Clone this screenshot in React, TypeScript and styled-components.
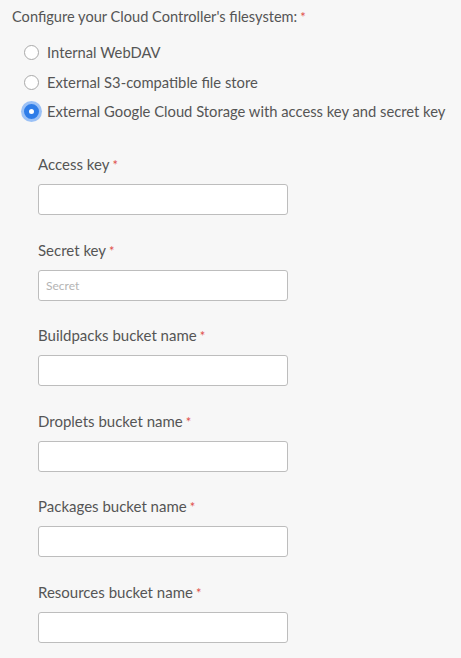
import React, { useState } from 'react';
import styled, { createGlobalStyle } from 'styled-components';

const GlobalStyle = createGlobalStyle`
  html, body {
    margin: 0;
    padding: 0;
    background: #f7f7f7;
  }
  body {
    font-family: Lato, "Open Sans", "Liberation Sans", sans-serif;
    color: #555;
  }
`;

const Page = styled.div`
  padding: 6px 12px 0 12px;
`;

const Heading = styled.div`
  font-size: 14.6px;
  line-height: 22px;
  height: 22px;
  color: #555;
  white-space: nowrap;
`;

const Star = styled.span`
  color: #e0504a;
  margin-left: 3px;
  font-size: 13px;
  line-height: 1;
`;

const RadioList = styled.div`
  display: flex;
  flex-direction: column;
  gap: 8.5px;
  margin-top: 14px;
  padding-left: 12px;
`;

const RadioRow = styled.label`
  display: flex;
  align-items: center;
  gap: 8px;
  font-size: 14.75px;
  line-height: 21px;
  color: #555;
  white-space: nowrap;
  cursor: pointer;
`;

const Dot = styled.span<{ $on: boolean }>`
  width: 15px;
  height: 15px;
  border-radius: 50%;
  box-sizing: border-box;
  flex: none;
  background: #fff;
  border: ${p => (p.$on ? '5px solid #2f7de8' : '1px solid #a9a9a9')};
  box-shadow: ${p => (p.$on ? '0 0 0 3px rgba(80, 150, 245, 0.55)' : 'none')};
`;

const Fields = styled.div`
  display: flex;
  flex-direction: column;
  gap: 24.6px;
  padding-left: 26px;
  margin-top: 32px;
`;

const Field = styled.div`
  display: flex;
  flex-direction: column;
  gap: 10px;
`;

const Label = styled.div`
  font-size: 15px;
  line-height: 20px;
  height: 20px;
  color: #555;
`;

const Input = styled.input`
  width: 250px;
  height: 31px;
  box-sizing: border-box;
  border: 1px solid #bdbdbd;
  border-radius: 3px;
  background: #fff;
  padding: 0 7px;
  font-family: inherit;
  font-size: 12px;
  color: #333;
  outline: none;
  &::placeholder {
    color: #b4b4b4;
  }
`;

const options = [
  'Internal WebDAV',
  'External S3-compatible file store',
  'External Google Cloud Storage with access key and secret key',
];

const fields: { label: string; placeholder?: string }[] = [
  { label: 'Access key' },
  { label: 'Secret key', placeholder: 'Secret' },
  { label: 'Buildpacks bucket name' },
  { label: 'Droplets bucket name' },
  { label: 'Packages bucket name' },
  { label: 'Resources bucket name' },
];

export default function App() {
  const [picked, setPicked] = useState(2);
  return (
    <>
      <GlobalStyle />
      <Page>
        <Heading>
          Configure your Cloud Controller's filesystem:<Star>*</Star>
        </Heading>
        <RadioList>
          {options.map((o, i) => (
            <RadioRow key={o} onClick={() => setPicked(i)}>
              <Dot $on={picked === i} />
              {o}
            </RadioRow>
          ))}
        </RadioList>
        <Fields>
          {fields.map(f => (
            <Field key={f.label}>
              <Label>
                {f.label}
                <Star>*</Star>
              </Label>
              <Input placeholder={f.placeholder} />
            </Field>
          ))}
        </Fields>
      </Page>
    </>
  );
}
